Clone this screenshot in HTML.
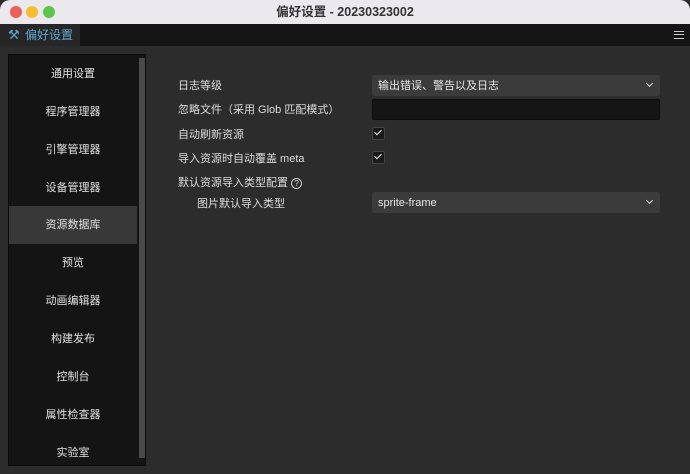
<!DOCTYPE html><html><head><style>
body{margin:0;width:690px;height:474px;background:#2c2c2c;font-family:"Liberation Sans","Noto Sans CJK SC",sans-serif;overflow:hidden;position:relative;color:#d8d8d8;font-size:11px}
.title{position:absolute;left:0;top:0;width:690px;height:24px;background:#ebe9ee;border-radius:10px 10px 0 0;text-align:center;line-height:24px;color:#333;font-size:12.5px;font-weight:bold}
.dot{position:absolute;top:6px;width:12px;height:12px;border-radius:50%}
.tabbar{position:absolute;left:0;top:24px;width:690px;height:22px;background:#151515}
.tab{position:absolute;left:0;top:0;width:80px;height:22px;background:#262626;color:#5ea7d1;font-size:12px;line-height:22px}
.side{position:absolute;left:8px;top:54px;width:138px;height:412px;background:#141414;border:1px solid #0a0a0a;box-sizing:border-box}
.it{position:absolute;left:0;width:128px;height:38px;line-height:38px;text-align:center;color:#e0e0e0;font-size:11px}
.sb{position:absolute;left:130px;top:3px;width:6px;height:400px;background:#4a4a4a}
.lb{position:absolute;left:178px;font-size:11px;color:#dcdcdc}
.dd{position:absolute;left:372px;width:288px;height:21px;background:#3b3b3b;border-radius:3px;line-height:22px;box-sizing:border-box;padding-left:6px;color:#e6e6e6}
.dd:after{content:"";position:absolute;right:8px;top:6px;width:4px;height:4px;border-right:1.5px solid #ddd;border-bottom:1.5px solid #ddd;transform:rotate(45deg)}
.cb{position:absolute;left:372px;width:11px;height:11px;background:#1a1a1a;border:1px solid #444;border-radius:2px}
.cb:after{content:"";position:absolute;left:3px;top:0px;width:3px;height:6px;border-right:1.6px solid #eee;border-bottom:1.6px solid #eee;transform:rotate(45deg)}
</style></head><body>
<div class="title">偏好设置 - 20230323002</div>
<div class="dot" style="left:10px;background:#ed5f57"></div>
<div class="dot" style="left:26px;background:#f5bd2f"></div>
<div class="dot" style="left:43px;background:#5fc54a"></div>
<div class="tabbar"><div class="tab"><span style="position:absolute;left:8px;font-size:13px">⚒</span><span style="position:absolute;left:25px">偏好设置</span></div>
<div style="position:absolute;left:674px;top:7px;width:10px;height:2px;border-top:1.5px solid #ccc;border-bottom:1.5px solid #ccc"></div><div style="position:absolute;left:674px;top:14px;width:10px;border-top:1.5px solid #ccc"></div></div>
<div class="side">
<div class="it" style="top:0">通用设置</div>
<div class="it" style="top:38px">程序管理器</div>
<div class="it" style="top:76px">引擎管理器</div>
<div class="it" style="top:114px">设备管理器</div>
<div class="it" style="top:151px;background:#383838">资源数据库</div>
<div class="it" style="top:189px">预览</div>
<div class="it" style="top:227px">动画编辑器</div>
<div class="it" style="top:265px">构建发布</div>
<div class="it" style="top:303px">控制台</div>
<div class="it" style="top:341px">属性检查器</div>
<div class="it" style="top:379px">实验室</div>
<div class="sb"></div></div>
<div class="lb" style="top:77px">日志等级</div>
<div class="dd" style="top:75px">输出错误、警告以及日志</div>
<div class="lb" style="top:101px">忽略文件（采用 Glob 匹配模式）</div>
<div style="position:absolute;left:372px;top:99px;width:288px;height:21px;background:#151515;border:1px solid #0c0c0c;box-sizing:border-box;border-radius:2px"></div>
<div class="lb" style="top:126px">自动刷新资源</div><div class="cb" style="top:127px"></div>
<div class="lb" style="top:150px">导入资源时自动覆盖 meta</div><div class="cb" style="top:151px"></div>
<div class="lb" style="top:174px">默认资源导入类型配置 <span style="display:inline-block;width:9px;height:9px;border:1px solid #ccc;border-radius:50%;font-size:8px;line-height:9px;text-align:center;vertical-align:middle">?</span></div>
<div class="lb" style="top:195px;left:197px">图片默认导入类型</div>
<div class="dd" style="top:192px">sprite-frame</div>
</body></html>
